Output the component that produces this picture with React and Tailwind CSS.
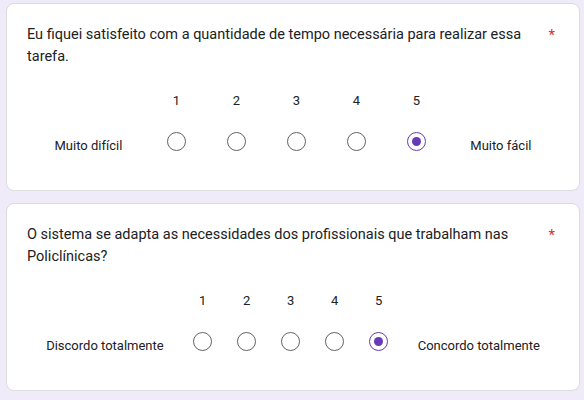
const questions = [
  {
    title: "Eu fiquei satisfeito com a quantidade de tempo necessária para realizar essa tarefa.",
    low: "Muito difícil",
    high: "Muito fácil",
    selected: 5,
    colW: "w-[60px]",
    labelPad: "px-[24px]",
  },
  {
    title: "O sistema se adapta as necessidades dos profissionais que trabalham nas Policlínicas?",
    low: "Discordo totalmente",
    high: "Concordo totalmente",
    selected: 5,
    colW: "w-[44px]",
    labelPad: "px-[17px]",
  },
];

function Radio({ checked }) {
  if (checked) {
    return (
      <div className="w-[19px] h-[19px] rounded-full border-[1.5px] border-[#673ab7] flex items-center justify-center">
        <div className="w-[9px] h-[9px] rounded-full bg-[#673ab7]" />
      </div>
    );
  }
  return <div className="w-[19px] h-[19px] rounded-full border-[1.5px] border-[#5f6368]" />;
}

function ScaleCard({ q }) {
  return (
    <div className="w-[574px] ml-[6px] bg-white rounded-[8px] border border-[#dadce0] px-[20px] pt-[20px] pb-[39px]">
      <div className="flex items-start">
        <div className="flex-1 pr-[14px] text-[14.5px] leading-[22px] text-[#202124]">{q.title}</div>
        <span className="text-[#d93025] text-[15px] leading-[22px] pr-[4px]">*</span>
      </div>
      <div className="mt-[23px] flex justify-center items-end text-[13px] text-[#202124]">
        <div className={`${q.labelPad} mb-[-5px] leading-[20px]`}>{q.low}</div>
        {[1, 2, 3, 4, 5].map((n) => (
          <div key={n} className={`${q.colW} flex flex-col items-center`}>
            <div className="leading-[20px]">{n}</div>
            <div className="mt-[21px]">
              <Radio checked={n === q.selected} />
            </div>
          </div>
        ))}
        <div className={`${q.labelPad} mb-[-5px] leading-[20px]`}>{q.high}</div>
      </div>
    </div>
  );
}

export default function App() {
  return (
    <div className="w-[584px] h-[400px] overflow-hidden bg-[#f0ebf8] pt-[3px] flex flex-col gap-[12px]" style={{ fontFamily: "Roboto, 'Liberation Sans', sans-serif" }}>
      {questions.map((q, i) => (
        <ScaleCard key={i} q={q} />
      ))}
    </div>
  );
}
